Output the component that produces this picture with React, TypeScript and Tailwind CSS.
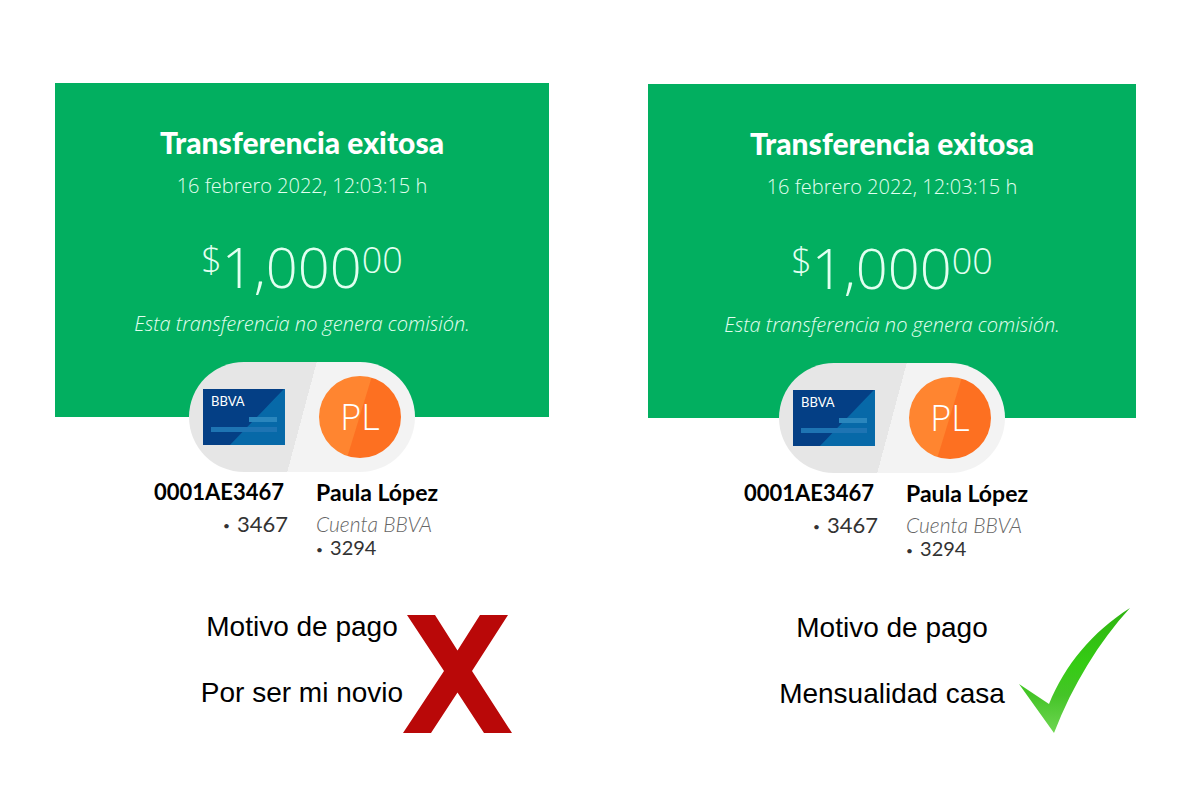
import { ReactNode } from 'react'
import clsx from 'clsx'

type ReceiptProps = {
  reason: string
  mark: ReactNode
  className?: string
}

const CrossMark = () => (
  <svg className="mt-2 h-[118px] w-[109px]" viewBox="0 0 109 118" role="img" aria-label="Incorrecto">
    <path fill="#b90808" d="M4 0H32L54.500 35.500L77 0H105L69 56L109 118H81L54.500 77.500L28 118H0L41 56Z" />
  </svg>
)

const CheckMark = () => (
  <svg className="ml-[14px] h-[125px] w-[111px]" viewBox="0 0 111 125" role="img" aria-label="Correcto">
    <defs>
      <linearGradient id="check" x1="0" y1="0" x2="0" y2="1">
        <stop offset="0" stopColor="#2fb312" />
        <stop offset="0.45" stopColor="#35cc14" />
        <stop offset="0.7" stopColor="#45c428" />
        <stop offset="1" stopColor="#6fd653" />
      </linearGradient>
    </defs>
    <path fill="url(#check)" d="M0 76L30 96C46 57 73 24 111 0C80 34 54 76 35 125Z" />
  </svg>
)

const BankCard = () => (
  <div className="flex h-14 w-[82px] flex-col bg-[linear-gradient(134deg,#043f85_59%,#0769a8_60%)] px-2 text-left">
    <span className="pt-1 font-['Lato',sans-serif] text-[13px] leading-4 text-white">BBVA</span>
    <span className="mt-2 h-[5px] w-7 self-end bg-[#2a86bd]" />
    <span className="mt-[5px] h-[5px] w-full bg-[#1e74b3]" />
  </div>
)

const Dot = () => <span className="mr-1 align-middle text-xs leading-none">• </span>

const Receipt = ({ reason, mark, className }: ReceiptProps) => {
  return (
    <article className={clsx("flex flex-col font-['Open_Sans',sans-serif]", className)}>
      <header className="flex flex-col items-center bg-[#02af60] pt-[39px] text-center text-[#e2fff0]">
        <h2 className="font-['Lato',sans-serif] text-3xl leading-10 font-black text-white">Transferencia exitosa</h2>
        <p className="mt-1 text-xl leading-10 font-light">16 febrero 2022, 12:03:15 h</p>
        <p className="mt-7 flex items-start font-light">
          <span className="text-4xl leading-[52px]">$</span>
          <span className="text-[56px] leading-16">1,000</span>
          <span className="text-4xl leading-[52px]">00</span>
        </p>
        <p className="mt-[10px] text-xl leading-8 font-light italic">Esta transferencia no genera comisión.</p>
        <div className="mt-[22px] -mb-[55px] flex h-[110px] w-[226px] items-center justify-between rounded-full bg-[linear-gradient(105deg,#e6e6e6_50%,#f3f3f3_50%)] px-[14px]">
          <BankCard />
          <div className="flex size-[82px] items-center justify-center rounded-full bg-[linear-gradient(107deg,#ff8530_49%,#fd7021_50%)] text-4xl font-light text-white">
            PL
          </div>
        </div>
      </header>

      <div className="mt-[59px] grid grid-cols-2 gap-7 font-['Lato',sans-serif] text-[22px] text-[#333]">
        <div className="text-right">
          <p className="pr-1 leading-8 font-bold text-black">0001AE3467</p>
          <p className="leading-8">
            <Dot />3467
          </p>
        </div>
        <div>
          <p className="text-[23px] leading-8 font-bold text-black">Paula López</p>
          <p className="pt-1 text-[21px] leading-6 font-light text-[#666] italic">Cuenta BBVA</p>
          <p className="text-xl leading-[23px]">
            <Dot />3294
          </p>
        </div>
      </div>

      <div className="mt-12 grid grid-cols-[1fr_auto_1fr] items-start font-['Liberation_Sans',Arial,sans-serif] text-[28px] text-black">
        <div className="col-start-2 pt-1 text-center">
          <p className="leading-8">Motivo de pago</p>
          <p className="mt-[34px] leading-8">{reason}</p>
        </div>
        {mark}
      </div>
    </article>
  )
}

export default function App() {
  return (
    <main className="grid min-h-screen grid-cols-[494fr_488fr] items-start gap-x-[99px] bg-white pt-[83px] pr-16 pl-[55px]">
      <Receipt reason="Por ser mi novio" mark={<CrossMark />} />
      <Receipt reason="Mensualidad casa" mark={<CheckMark />} className="pt-px" />
    </main>
  )
}
